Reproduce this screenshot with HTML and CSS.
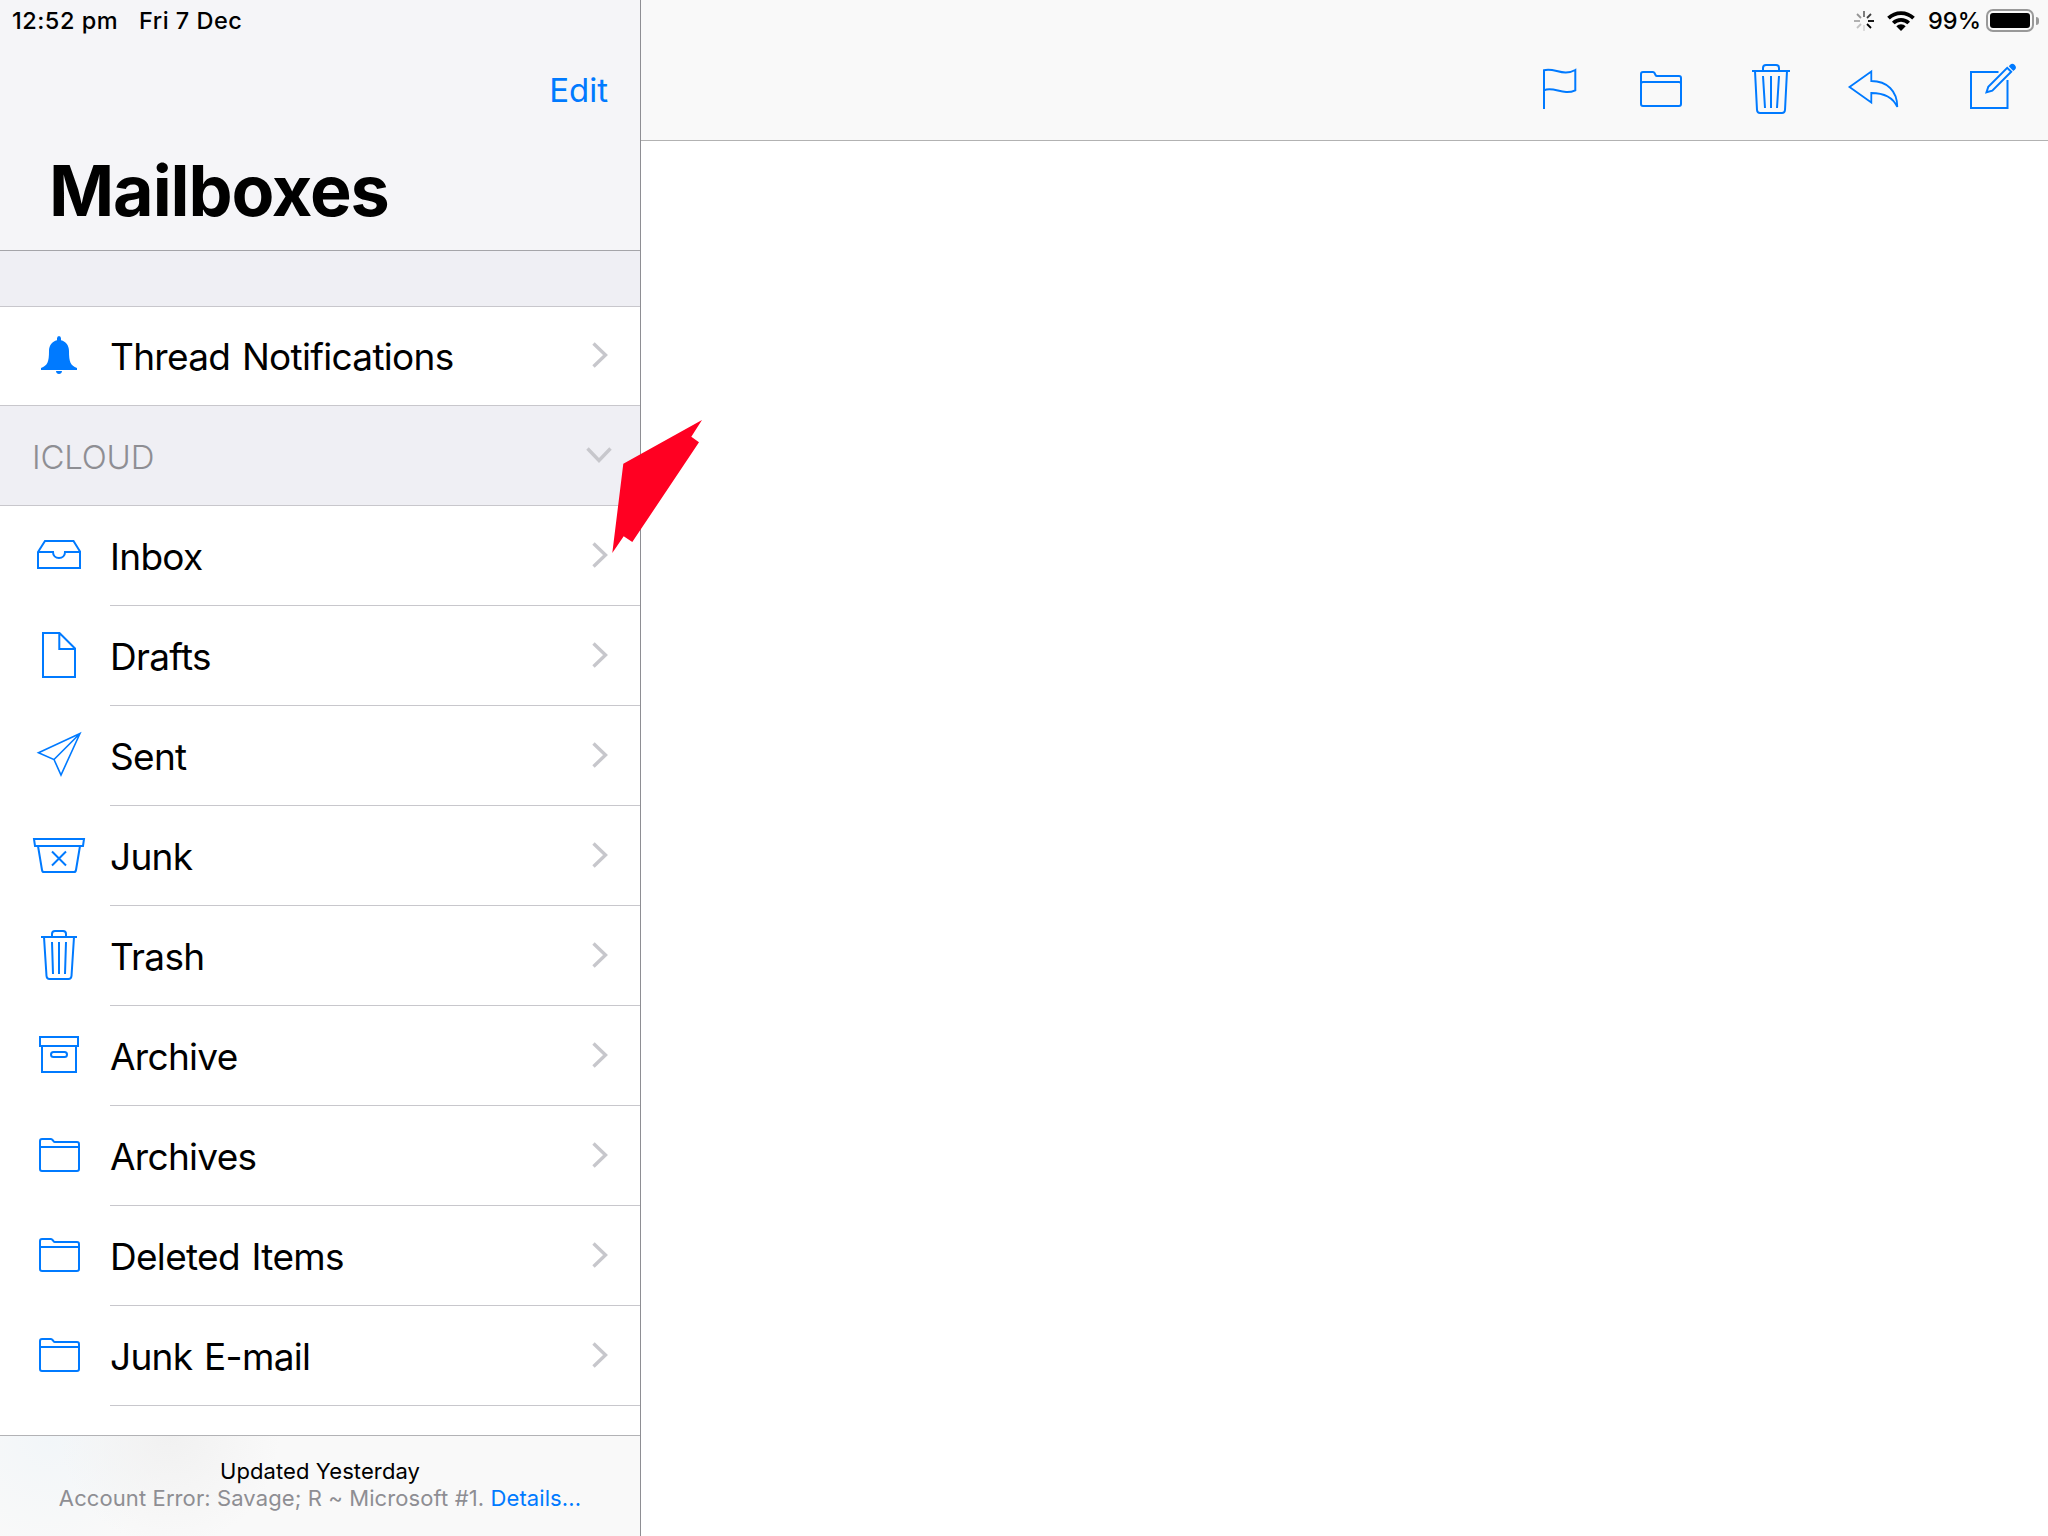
FILE: index.html
```
<!DOCTYPE html>
<html lang="en">
<head>
    <meta charset="UTF-8">
    <meta name="viewport" content="width=device-width, initial-scale=1.0">
    <title>Mailboxes</title>
    <link rel="stylesheet" href="styles.css">
</head>
<body>
    <!-- shared icons -->
    <svg class="sprite">
        <symbol id="chevron" viewBox="0 0 16 26"><path d="M1.5 1.5L13.5 13L1.5 24.5"/></symbol>
        <symbol id="folder" viewBox="0 0 60 60"><path d="M11 43V15a2 2 0 0 1 2-2H22q1 0 1.5 1l1 1.2q.5.8 1.5.8H48a2 2 0 0 1 2 2V43a2 2 0 0 1-2 2H13a2 2 0 0 1-2-2zM11 21H50"/></symbol>
    </svg>

    <div class="app">
        <aside class="sidebar">
            <header class="sidebar-header">
                <div class="status status-left">
                    <span class="time">12:52 pm</span>
                    <span class="date">Fri 7 Dec</span>
                </div>
                <div class="nav"><a class="edit">Edit</a></div>
                <h1>Mailboxes</h1>
            </header>

            <ul class="list top-list">
                <li class="row">
                    <svg class="icon filled" viewBox="0 0 60 60"><path d="M28 12.5a2 2.5 0 0 1 4 0V14.2C37 15.5 40 19.5 40 25C40 36 41.5 39.5 48 42V44H12V42C18.5 39.5 20 36 20 25C20 19.5 23 15.5 28 14.2zM27 45H33C33 47 31.5 48 30 48S27 47 27 45z"/></svg>
                    <div class="row-body"><span>Thread Notifications</span><svg class="chevron"><use href="#chevron"/></svg></div>
                </li>
            </ul>

            <div class="section">
                <span>ICLOUD</span>
                <svg class="chevron-down" viewBox="0 0 26 16"><path d="M1.5 1.5L13 13.5L24.5 1.5"/></svg>
            </div>

            <ul class="list folders">
                <li class="row">
                    <svg class="icon" viewBox="0 0 60 60"><path d="M9 26L16 15H44.5L51 25.5V42H9zM9 26H24C24 29.5 26.5 32 30 32S36 29.5 36 26H51"/></svg>
                    <div class="row-body"><span>Inbox</span><svg class="chevron"><use href="#chevron"/></svg></div>
                </li>
                <li class="row">
                    <svg class="icon" viewBox="0 0 60 60"><path d="M14 7H30.5L46 22.5V51H14zM30.3 7V23H46"/></svg>
                    <div class="row-body"><span>Drafts</span><svg class="chevron"><use href="#chevron"/></svg></div>
                </li>
                <li class="row">
                    <svg class="icon thin" viewBox="0 0 60 60"><path d="M51 7.5L9.500 26.700L25 33.500L32 49zM51 7.500L25 33.500"/></svg>
                    <div class="row-body"><span>Sent</span><svg class="chevron"><use href="#chevron"/></svg></div>
                </li>
                <li class="row">
                    <svg class="icon" viewBox="0 0 60 60"><path d="M5 13H55L54 20H6zM9 20L13 44Q13.3 46 15 46H45Q46.7 46 47 44L51 20M23 25.5L37 39.5M37 25.5L23 39.5"/></svg>
                    <div class="row-body"><span>Junk</span><svg class="chevron"><use href="#chevron"/></svg></div>
                </li>
                <li class="row">
                    <svg class="icon" viewBox="0 0 60 60"><path d="M12 11H48M23 11V8Q23 5 26 5H34Q37 5 37 8V11M15 11L17.5 50Q17.8 53 20.5 53H39.5Q42.2 53 42.5 50L45 11M23 16L24 48M30 16V48M37 16L36 48"/></svg>
                    <div class="row-body"><span>Trash</span><svg class="chevron"><use href="#chevron"/></svg></div>
                </li>
                <li class="row">
                    <svg class="icon" viewBox="0 0 60 60"><path d="M11 11H49V20H11zM13 20V46H47V20"/><rect x="22" y="26" width="16" height="5" rx="2.5"/></svg>
                    <div class="row-body"><span>Archive</span><svg class="chevron"><use href="#chevron"/></svg></div>
                </li>
                <li class="row">
                    <svg class="icon"><use href="#folder"/></svg>
                    <div class="row-body"><span>Archives</span><svg class="chevron"><use href="#chevron"/></svg></div>
                </li>
                <li class="row">
                    <svg class="icon"><use href="#folder"/></svg>
                    <div class="row-body"><span>Deleted Items</span><svg class="chevron"><use href="#chevron"/></svg></div>
                </li>
                <li class="row">
                    <svg class="icon"><use href="#folder"/></svg>
                    <div class="row-body"><span>Junk E-mail</span><svg class="chevron"><use href="#chevron"/></svg></div>
                </li>
            </ul>

            <footer class="sidebar-footer">
                <p class="updated">Updated Yesterday</p>
                <p class="error">Account Error: Savage; R ~ Microsoft #1. <a>Details...</a></p>
            </footer>
        </aside>

        <main class="content">
            <header class="content-header">
                <div class="status status-right">
                    <svg class="spinner" viewBox="0 0 20 20">
                        <path d="M10 0V6" opacity=".55"/>
                        <path d="M17 3L13 7" opacity=".75"/>
                        <path d="M14 10H20"/>
                        <path d="M13 13L17 17"/>
                        <path d="M10 14V20" opacity=".12"/>
                        <path d="M7 13L3 17" opacity=".22"/>
                        <path d="M6 10H0" opacity=".32"/>
                        <path d="M7 7L3 3" opacity=".4"/>
                    </svg>
                    <svg class="wifi" viewBox="0 0 28 20">
                        <path d="M1.5 7.2A18 18 0 0 1 26.5 7.2M6.3 12A11 11 0 0 1 21.7 12"/>
                        <path class="dot" d="M14 20L9.3 15.3A6.6 6.6 0 0 1 18.7 15.3z"/>
                    </svg>
                    <span class="percent">99%</span>
                    <span class="battery"><span class="level"></span></span>
                    <span class="battery-cap"></span>
                </div>
                <div class="toolbar">
                    <svg class="icon" viewBox="0 0 60 60"><path d="M14 49V10.3C24 7 33 17 45.3 10V30.3C33 36 24 26 14 30.3"/></svg>
                    <svg class="icon move" viewBox="0 0 60 60"><path d="M10 44V14a2 2 0 0 1 2-2H22q1 0 1.5 1l1 2q.5 1 1.5 1H48a2 2 0 0 1 2 2V44a2 2 0 0 1-2 2H12a2 2 0 0 1-2-2zM10 24a2 2 0 0 1 2-2H48a2 2 0 0 1 2 2"/></svg>
                    <svg class="icon delete" viewBox="0 0 60 60"><path d="M11 11H49M22 11V8Q22 5 25 5H35Q38 5 38 8V11M14 11L16 50Q16.3 53 19 53H41Q43.7 53 44 50L46 11M22 16L24 48M30 16V48M38 16L36 48"/></svg>
                    <svg class="icon reply" viewBox="0 0 60 60"><path d="M6.500 27L28.300 11.500V21C44 21 54.300 31 54.300 47Q48 33 28.300 33V42.500z"/></svg>
                    <svg class="icon compose" viewBox="0 0 60 60"><path d="M35.500 12H8V48H44.500V20"/><path d="M23.500 32.300L25.300 26.700L44.200 7.800L48.200 11.800L29.300 30.700z"/><path class="eraser" d="M45.800 6.200L47.200 4.700Q49.300 2.700 51.800 5Q54 7.500 52 9.500L50.300 11z"/></svg>
                </div>
            </header>
        </main>

        <!-- red annotation arrow -->
        <svg class="arrow" viewBox="0 0 90 134"><path d="M90 0L79.3 16.7L87 22.3L20.3 122L11.7 116.3L0.3 133L11.3 43.7z"/></svg>
    </div>
</body>
</html>
```
FILE: styles.css
```
* {
    box-sizing: border-box;
}
body {
    margin: 0;
    font-family: Inter, "Liberation Sans", sans-serif;
    background-color: #fff;
    color: #000;
}
h1, p, ul {
    margin: 0;
    padding: 0;
}
.sprite {
    display: none;
}
.app {
    position: relative;
    display: flex;
    width: 2048px;
    height: 1536px;
    overflow: hidden;
}

/* sidebar */
.sidebar {
    display: flex;
    flex-direction: column;
    width: 641px;
    border-right: 1px solid #8e8e93;
    background-color: #fff;
}
.sidebar-header {
    height: 251px;
    background-color: #f5f5f8;
    border-bottom: 1px solid #a5a5a9;
}
.status {
    display: flex;
    align-items: center;
    height: 41px;
    font-size: 23.5px;
    font-weight: 450;
}
.status-left {
    padding-left: 12px;
    gap: 21px;
    letter-spacing: 0.5px;
}
.nav {
    display: flex;
    align-items: center;
    justify-content: flex-end;
    height: 98px;
    padding-right: 32px;
    font-size: 33px;
    color: #007aff;
}
h1 {
    padding-left: 49px;
    font-size: 70px;
    line-height: 103px;
    font-weight: 700;
    letter-spacing: -1.1px;
}
.list {
    list-style: none;
}
.top-list {
    padding-top: 55px;
    background-color: #efeff4;
}
.row {
    display: flex;
    align-items: center;
    height: 100px;
    background-color: #fff;
}
.top-list .row {
    border-top: 1px solid #c8c7cc;
    border-bottom: 1px solid #c8c7cc;
}
.icon {
    flex: none;
    width: 60px;
    height: 60px;
    fill: none;
    stroke: #007aff;
    stroke-width: 2;
}
.row .icon {
    margin: 0 21px 0 29px;
}
.icon.thin {
    stroke-width: 1.6;
}
.icon.filled {
    fill: #007aff;
    stroke: none;
}
.row-body {
    display: flex;
    flex: 1;
    align-items: center;
    justify-content: space-between;
    height: 100%;
    padding-right: 32px;
    font-size: 37px;
    font-weight: 380;
    letter-spacing: -0.7px;
    word-spacing: 2px;
}
.row-body span {
    padding-top: 2px;
}
.top-list .row-body span {
    padding-top: 0;
}
.folders {
    flex: 1;
}
.folders .row-body {
    border-bottom: 1px solid #c8c7cc;
}
.chevron, .chevron-down {
    width: 16px;
    height: 26px;
    margin-bottom: 2px;
    fill: none;
    stroke: #c7c7cc;
    stroke-width: 3.4;
}
.chevron-down {
    width: 26px;
    height: 16px;
}
.section {
    display: flex;
    align-items: center;
    justify-content: space-between;
    height: 100px;
    padding: 0 28px 0 32px;
    background-color: #efeff4;
    border-bottom: 1px solid #c8c7cc;
    font-size: 33px;
    font-weight: 350;
    color: #8e8e93;
}
.section span {
    padding-top: 3px;
    letter-spacing: -0.2px;
}
.sidebar-footer {
    height: 101px;
    padding-top: 22px;
    border-top: 1px solid #b2b2b5;
    background: radial-gradient(circle at 170px 0, #f1f1f1, rgba(249, 249, 249, 0) 110px),
        radial-gradient(circle at 50px 0, #f2f6f9, rgba(249, 249, 249, 0) 120px), #f9f9f9;
    font-size: 22px;
    line-height: 27px;
    letter-spacing: 0.1px;
    text-align: center;
}
.error {
    color: #8e8e93;
}
.error a {
    color: #007aff;
}

/* message pane */
.content {
    flex: 1;
    background-color: #fff;
}
.content-header {
    height: 141px;
    background-color: #f9f9f9;
    border-bottom: 1px solid #b2b2b2;
}
.status-right {
    justify-content: flex-end;
    padding-right: 9px;
}
.spinner {
    width: 20px;
    height: 20px;
    margin-right: 13px;
    stroke: #000;
    stroke-width: 1.8;
}
.wifi {
    width: 28px;
    height: 20px;
    margin-right: 13px;
    fill: none;
    stroke: #000;
    stroke-width: 3.8;
}
.wifi .dot {
    fill: #000;
    stroke: none;
}
.percent {
    margin-right: 5px;
}
.battery {
    width: 48px;
    height: 23px;
    padding: 2px;
    border: 2px solid #999;
    border-radius: 7px;
}
.level {
    display: block;
    height: 15px;
    border-radius: 3px;
    background-color: #000;
}
.battery-cap {
    width: 3px;
    height: 8px;
    margin-left: 2px;
    border-radius: 0 4px 4px 0;
    background-color: #999;
}
.toolbar {
    display: flex;
    justify-content: flex-end;
    padding: 19px 25px 0 0;
}
.move {
    margin-left: 41px;
}
.delete {
    margin-left: 50px;
}
.reply {
    margin-left: 42px;
    stroke-width: 1.8;
}
.compose {
    margin-left: 60px;
}
.eraser {
    fill: #007aff;
    stroke: none;
}
.arrow {
    position: absolute;
    left: 612px;
    top: 420px;
    width: 90px;
    height: 134px;
    fill: #ff0022;
}
```
